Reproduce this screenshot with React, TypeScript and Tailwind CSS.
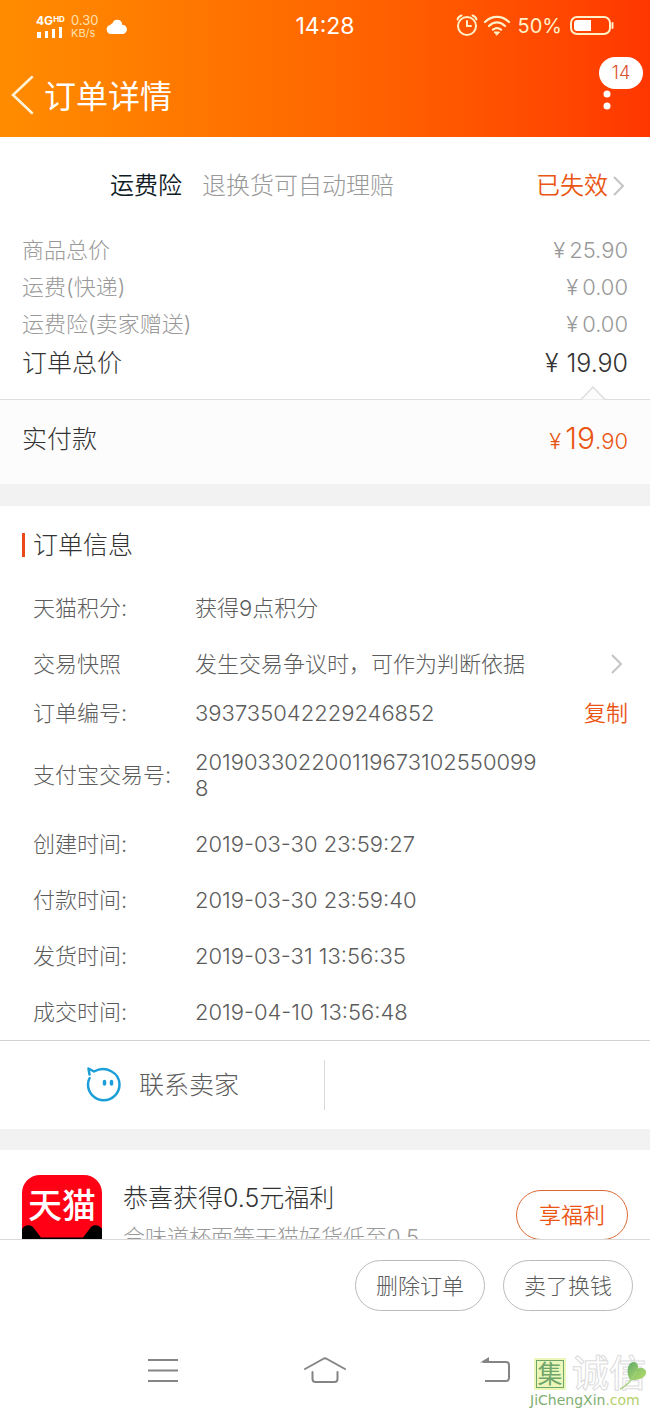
import type { ReactNode } from 'react'

const fees = [
  { label: '商品总价', value: '25.90' },
  { label: '运费(快递)', value: '0.00' },
  { label: '运费险(卖家赠送)', value: '0.00' },
]

const times = [
  { label: '创建时间:', value: '2019-03-30 23:59:27' },
  { label: '付款时间:', value: '2019-03-30 23:59:40' },
  { label: '发货时间:', value: '2019-03-31 13:56:35' },
  { label: '成交时间:', value: '2019-04-10 13:56:48' },
]

function Chevron() {
  return (
    <svg viewBox="0 0 14 22" className="w-[14px] h-[22px] shrink-0" fill="none" stroke="#c4c4c4" strokeWidth="2">
      <path d="M2 2l9 9-9 9" />
    </svg>
  )
}

function StatusBar() {
  return (
    <div className="grid grid-cols-[1fr_auto_1fr] items-center h-[52px] pl-9 pr-9">
      <div className="flex items-center">
        <div className="w-7">
          <div className="flex items-start text-[12px] leading-[12px] font-bold">
            4G<span className="text-[8px] leading-[8px]">HD</span>
          </div>
          <svg viewBox="0 0 28 11" className="w-7 h-[11px]" fill="#fff">
            <path d="M1 5h4v6H1zM9 4h3v7H9zM16 2h3v9h-3zM23 0h3v11h-3z" />
          </svg>
        </div>
        <div className="ml-[7px] w-8 text-[#ffe0b0]">
          <div className="text-[13px] leading-[14px]">0.30</div>
          <div className="text-[11px] leading-[12px]">KB/s</div>
        </div>
        <svg viewBox="0 0 22 18" className="ml-[3px] w-[22px] h-[18px]" fill="#fff">
          <path d="M5 17a4.600 4.600 0 0 1-.6-9.100C5 7 5.800 6.700 6.400 6.600A5 5 0 0 1 16 6.200c0 .8-.1 1.100-.2 1.600A4.600 4.600 0 0 1 16.800 17z" />
        </svg>
      </div>
      <div className="text-[23px] leading-[28px]">14:28</div>
      <div className="flex items-center justify-end">
        <svg viewBox="0 0 24 24" className="w-6 h-6" fill="none" stroke="#fff0c8" strokeWidth="2" strokeLinecap="round">
          <circle cx="12" cy="12" r="9" />
          <path d="M12 7v5h4M2.500 5.500C3 3.500 4.500 2 6.500 1.500M21.500 5.500C21 3.500 19.500 2 17.500 1.500" />
        </svg>
        <svg viewBox="0 0 28 22" className="ml-1 w-7 h-[22px]" fill="none" stroke="#fff0c8" strokeWidth="2.200" strokeLinecap="round">
          <path d="M2 7C9 .1 19 .1 26 7M6 11c4.800-4.800 11.200-4.800 16 0M10 14.700c2.500-2 5.500-2 8 0" />
          <path d="M11.500 17h5L14 20z" fill="#fff0c8" strokeWidth="1" strokeLinejoin="round" />
        </svg>
        <span className="ml-[7px] text-[20px] leading-[24px] text-[#fff0c8]">50%</span>
        <svg viewBox="0 0 44 20" className="ml-2 w-11 h-5" fill="none" stroke="#fff0c8" strokeWidth="2">
          <rect x="1" y="1" width="39" height="17" rx="6" />
          <path d="M42.500 7v5" strokeLinecap="round" />
          <path d="M7 4h14v11H7c-2 0-3-1-3-3V7c0-2 1-3 3-3z" fill="#fff" stroke="none" />
        </svg>
      </div>
    </div>
  )
}

function InfoRow({ label, className, children }: { label: string; className: string; children: ReactNode }) {
  return (
    <div className={`flex items-center ${className}`}>
      <dt className="w-[162px] shrink-0">{label}</dt>
      <dd className="flex flex-1 items-center justify-between">{children}</dd>
    </div>
  )
}

export default function App() {
  return (
    <div className="relative h-screen flex flex-col bg-white overflow-hidden text-[22px] leading-[26px] font-light text-[#5c5c5c] font-[Inter,'Noto_Sans_CJK_SC',sans-serif]">
      <header className="shrink-0 bg-linear-to-r from-[#ff8c00] to-[#ff3600] text-white font-normal">
        <StatusBar />
        <div className="flex items-center h-[85px] pl-[10px] pr-[34px]">
          <button type="button" aria-label="返回">
            <svg viewBox="0 0 24 40" className="w-6 h-10" fill="none" stroke="#fff3d6" strokeWidth="2.500" strokeLinecap="round">
              <path d="M22 2L3 20l19 18" />
            </svg>
          </button>
          <h1 className="ml-[10px] pt-1 text-[32px] leading-[40px] font-normal">订单详情</h1>
          <button type="button" aria-label="更多" className="relative ml-auto">
            <svg viewBox="0 0 20 40" className="w-5 h-10" fill="#fff">
              <circle cx="11" cy="7" r="3.500" />
              <circle cx="11" cy="19" r="3.500" />
              <circle cx="11" cy="31" r="3.500" />
            </svg>
            <span className="absolute -top-[18px] left-[3px] w-11 h-8 rounded-full bg-white text-[#d8502c] text-[18px] leading-[32px] text-center font-light">14</span>
          </button>
        </div>
      </header>

      <main className="flex-1 min-h-0 overflow-y-auto [scrollbar-width:none]">
        <section>
          <a href="#insurance" className="flex items-center h-[94px] pt-1 pl-[110px] pr-6 text-[24px]">
            <span className="text-[#0f1c26] font-[350]">运费险</span>
            <span className="ml-5 text-[#999]">退换货可自动理赔</span>
            <span className="ml-auto mr-1 text-[#ea5514] font-[350]">已失效</span>
            <Chevron />
          </a>
          <dl className="px-[22px] pb-4 text-[#999]">
            {fees.map(fee => (
              <div key={fee.label} className="flex items-center justify-between h-[37px]">
                <dt>{fee.label}</dt>
                <dd><span className="mr-1">¥</span>{fee.value}</dd>
              </div>
            ))}
            <div className="flex items-center justify-between h-[41px] text-[25px] text-[#333]">
              <dt>订单总价</dt>
              <dd><span className="mr-2">¥</span>19.90</dd>
            </div>
          </dl>
          <div className="relative flex items-center justify-between h-[85px] px-[22px] pb-[6px] border-t border-[#dedede] bg-[#fcfcfc]">
            <svg viewBox="0 0 26 14" className="absolute right-[44px] -top-[14px] w-[26px] h-[14px]" fill="#fcfcfc" stroke="#dedede" strokeWidth="1.500">
              <path d="M1 13.500L13 1l12 12.500" />
            </svg>
            <span className="text-[25px] text-[#333]">实付款</span>
            <span className="text-[#ea5514]"><span className="mr-1">¥</span><span className="text-[30px]">19</span>.90</span>
          </div>
        </section>

        <section className="border-t-[22px] border-[#f2f2f2]">
          <h2 className="flex items-center gap-2 h-[74px] pt-1 pl-[22px] text-[25px] text-[#333]">
            <span className="w-[3px] h-6 bg-[#ea4a1a]" />
            订单信息
          </h2>
          <dl className="pl-[33px] pr-[22px]">
            <InfoRow label="天猫积分:" className="h-14">获得9点积分</InfoRow>
            <InfoRow label="交易快照" className="h-14">
              <a href="#snapshot" className="flex flex-1 items-center justify-between pr-1">
                发生交易争议时，可作为判断依据
                <Chevron />
              </a>
            </InfoRow>
            <InfoRow label="订单编号:" className="h-[42px]">
              393735042229246852
              <button type="button" className="text-[#ea5514] font-[350]">复制</button>
            </InfoRow>
            <InfoRow label="支付宝交易号:" className="h-[82px]">
              <span className="w-[350px] break-all">2019033022001196731025500998</span>
            </InfoRow>
            {times.map(time => (
              <InfoRow key={time.label} label={time.label} className="h-14">{time.value}</InfoRow>
            ))}
          </dl>
        </section>

        <section className="grid grid-cols-2 items-center h-[89px] border-t border-[#d2d2d2]">
          <button type="button" className="flex items-center justify-center gap-4 h-[50px] border-r border-[#d9d9d9] text-[25px]">
            <svg viewBox="0 0 38 38" className="w-[38px] h-[38px]" fill="none" stroke="#1c9fd9" strokeWidth="2.500" strokeLinecap="round" strokeLinejoin="round">
              <path d="M9 5.500C21-1 34.500 7 34.500 18.500A15.700 15.700 0 0 1 3 18.500c0-2.500.6-4.500 1.500-6.300M4.500 8.500L3.500 2.500l5.500 3" />
              <path d="M19.500 15.500v2.500M26.500 15.500v2.500" strokeWidth="3.500" />
            </svg>
            联系卖家
          </button>
        </section>

        <section className="flex items-center border-t-[21px] border-[#f2f2f2] px-[22px] pt-[25px] pb-6">
          <div className="relative w-20 h-20 shrink-0 rounded-[18px] overflow-hidden bg-[#ff0015] text-white text-[34px] leading-[62px] text-center font-medium">
            <svg viewBox="0 0 80 80" className="absolute inset-0 w-20 h-20" fill="#000">
              <path d="M0 54C2 50 8 49 11 52l8 10.500h42L69 52c3-3 9-2 11 2v26H0z" />
            </svg>
            <span className="relative">天猫</span>
          </div>
          <div className="ml-[21px] self-start">
            <div className="text-[25px] leading-[46px] text-[#333]">恭喜获得0.5元福利</div>
            <div className="leading-[32px] text-[#999]">合味道杯面等天猫好货低至0.5</div>
          </div>
          <button type="button" className="ml-auto w-28 h-[50px] rounded-full border border-[#dc6a35] text-[#ea5514] font-[350]">享福利</button>
        </section>
      </main>

      <div className="shrink-0 flex items-center justify-end gap-[18px] h-[91px] pr-[17px] pt-px border-t border-[#d9d9d9]">
        <button type="button" className="w-[130px] h-[51px] rounded-full border border-[#bbb]">删除订单</button>
        <button type="button" className="w-[130px] h-[51px] rounded-full border border-[#bbb]">卖了换钱</button>
      </div>

      <nav className="shrink-0 grid grid-cols-3 justify-items-center items-center h-[78px] pt-1 px-20">
        <button type="button" aria-label="菜单">
          <svg viewBox="0 0 44 32" className="w-11 h-8" fill="none" stroke="#858585" strokeWidth="2">
            <path d="M8 5h30M8 15.500h30M8 26h30" />
          </svg>
        </button>
        <button type="button" aria-label="主页">
          <svg viewBox="0 0 44 32" className="w-11 h-8" fill="none" stroke="#858585" strokeWidth="2" strokeLinecap="round">
            <path d="M2 14L20 4q2-1.500 4 0l18 10M9.500 17v7q0 3 3 3h19q3 0 3-3v-7" />
          </svg>
        </button>
        <button type="button" aria-label="后退">
          <svg viewBox="0 0 44 32" className="w-11 h-8" fill="none" stroke="#858585" strokeWidth="2">
            <path d="M17 7h23q3 0 3 3v13q0 3-3 3H19" />
            <path d="M14 7.500L23 2v5.500z" fill="#858585" stroke="none" />
          </svg>
        </button>
      </nav>

      {/* site stamp in the corner */}
      <div className="absolute right-0 bottom-0 w-[120px] pointer-events-none">
        <div className="flex items-center gap-[6px]">
          <span className="ml-1 p-[2px] bg-[#eaf7b8]">
            <span className="block w-7 h-7 border border-[#6fa56b] text-[#6fa56b] text-[25px] leading-[26px] text-center font-normal">集</span>
          </span>
          <span className="text-[37px] leading-[37px] font-medium text-white [-webkit-text-stroke:1px_#dcdcdc]">诚信</span>
        </div>
        <svg viewBox="0 0 30 32" className="absolute right-0 top-1 w-[30px] h-8">
          <defs>
            <linearGradient id="leaf" x1="0" y1="0" x2="1" y2="1">
              <stop offset="0" stopColor="#5fa86a" />
              <stop offset=".45" stopColor="#8cc46a" />
              <stop offset="1" stopColor="#b4dc6c" />
            </linearGradient>
          </defs>
          <path d="M10 21C6 14 7 4 13 3c4-.6 5.500 3 5 6.500C22 8 27 10 26 14.500 25 20 16 21.500 10 21z" fill="url(#leaf)" />
          <path d="M16 13C12 21 7 27 0 30" fill="none" stroke="#a3d07a" strokeWidth="1.500" strokeLinecap="round" />
        </svg>
        <div className="text-[14px] leading-[16px] text-[#7fae72] font-normal font-['DejaVu_Sans',sans-serif]">JiChengXin<span className="text-[#b5cf6a]">.com</span></div>
      </div>
    </div>
  )
}
